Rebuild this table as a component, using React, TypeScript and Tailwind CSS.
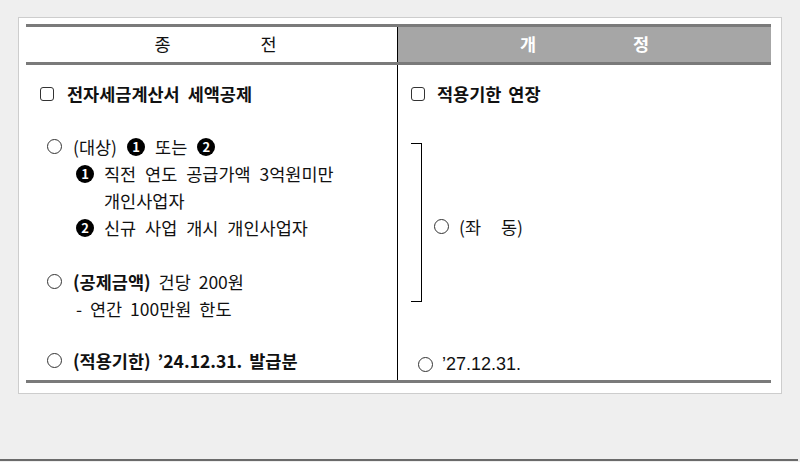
const font = { fontFamily: '"Noto Sans CJK KR", "Noto Sans", sans-serif' };

function Box() {
  return <span className="inline-block h-[14px] w-[14px] shrink-0 rounded-[3px] border-[1.5px] border-[#333]" />;
}

function Circle() {
  return <span className="inline-block h-[15px] w-[15px] shrink-0 rounded-full border border-[#333]" />;
}

function Num({ n }: { n: number }) {
  return (
    <span className="inline-flex h-[18px] w-[18px] shrink-0 items-center justify-center rounded-full bg-black text-[13px] font-bold leading-none text-white">
      {n}
    </span>
  );
}

export default function App() {
  return (
    <div
      className="h-[462px] w-[800px] overflow-hidden bg-[#efefef] pl-[18px] pt-[17px] text-[17.5px] text-[#111]"
      style={font}
    >
      <div className="relative h-[444px] w-[782px]">
        <div className="h-[377px] w-[764px] border border-[#cdcdcd] bg-white pl-[7px] pt-[6px]">
          <div className="w-[745px] border-y-[3px] border-[#7a7a7a]">
            {/* header */}
            <div className="flex h-[38px] border-b-[3px] border-[#7a7a7a]">
              <div className="flex w-[372px] items-center justify-center gap-[90px] border-r border-black pl-[8px]">
                <span>종</span>
                <span>전</span>
              </div>
              <div className="flex flex-1 items-center justify-center gap-[97px] bg-[#a6a6a6] font-bold text-white">
                <span>개</span>
                <span>정</span>
              </div>
            </div>

            {/* body */}
            <div className="flex h-[315px]">
              <div className="w-[372px] border-r border-black pt-[17px] leading-[24px]">
                <div className="flex items-center gap-[13px] pl-[14px] font-bold">
                  <Box />
                  <span className="[word-spacing:4px]">전자세금계산서 세액공제</span>
                </div>

                <div className="mt-[27px] leading-[27px]">
                  <div className="flex items-center gap-[11px] pl-[21px]">
                    <Circle />
                    <span className="flex items-center gap-[10px]">
                      (대상) <Num n={1} /> 또는 <Num n={2} />
                    </span>
                  </div>
                  <div className="flex gap-[10px] pl-[50px]">
                    <span className="flex h-[27px] items-center">
                      <Num n={1} />
                    </span>
                    <span className="[word-spacing:5px]">
                      직전 연도 공급가액 3억원미만
                      <br />
                      개인사업자
                    </span>
                  </div>
                  <div className="flex items-center gap-[10px] pl-[50px]">
                    <Num n={2} />
                    <span className="[word-spacing:5px]">신규 사업 개시 개인사업자</span>
                  </div>
                </div>

                <div className="mt-[27px] leading-[27px]">
                  <div className="flex items-center gap-[11px] pl-[21px]">
                    <Circle />
                    <span className="[word-spacing:4px]">
                      <b>(공제금액)</b> 건당 200원
                    </span>
                  </div>
                  <div className="pl-[50px] [word-spacing:4px]">- 연간 100만원 한도</div>
                </div>

                <div className="mt-[25px] flex items-center gap-[11px] pl-[21px] font-bold leading-[27px]">
                  <Circle />
                  <span className="[word-spacing:3px]">(적용기한) ’24.12.31. 발급분</span>
                </div>
              </div>

              <div className="flex-1 pt-[17px] leading-[24px]">
                <div className="flex items-center gap-[12px] pl-[13px] font-bold">
                  <Box />
                  <span className="[word-spacing:3px]">적용기한 연장</span>
                </div>

                <div className="mt-[37px] flex items-center pl-[13px]">
                  <div className="h-[159px] w-[11px] border-y border-r border-black" />
                  <div className="ml-[12px] mt-[8px] flex items-center gap-[10px]">
                    <Circle />
                    <span>
                      (좌<span className="ml-[20px]">동)</span>
                    </span>
                  </div>
                </div>

                <div className="mt-[49px] flex items-center gap-[9px] pl-[20px] leading-[27px]">
                  <Circle />
                  <span className="text-[18px]" style={{ fontFamily: '"Liberation Sans", Arial, sans-serif' }}>
                    ’27.12.31.
                  </span>
                </div>
              </div>
            </div>
          </div>
        </div>
      </div>
      <div className="absolute left-0 top-[459px] h-[2px] w-[798px] bg-[#6a6a6a]" />
    </div>
  );
}
